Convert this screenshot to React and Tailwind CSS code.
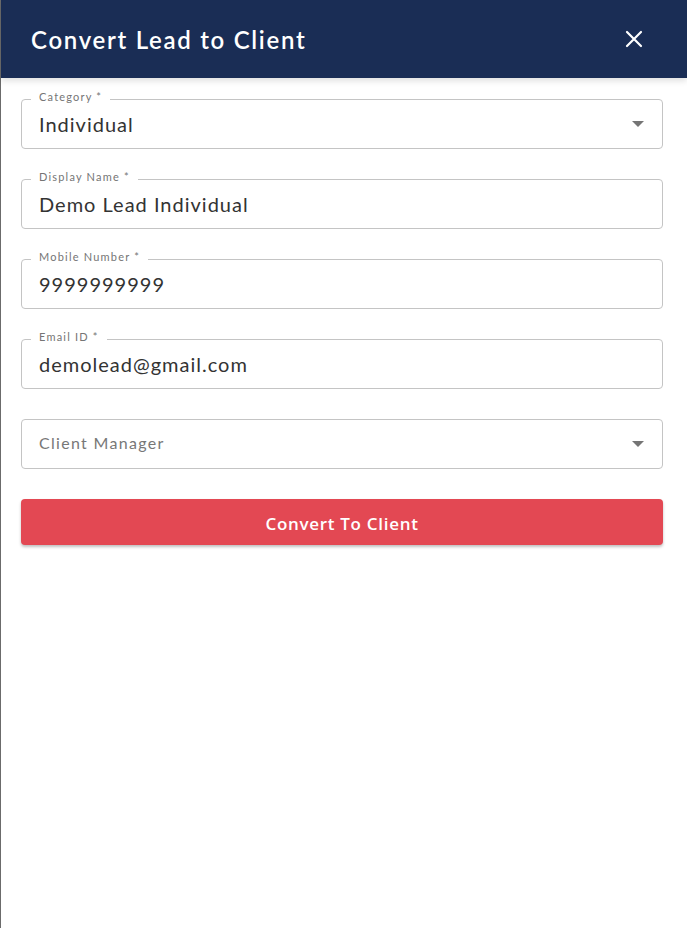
import React from 'react';

const fields = [
  { label: 'Category *', value: 'Individual', select: true },
  { label: 'Display Name *', value: 'Demo Lead Individual' },
  { label: 'Mobile Number *', value: '9999999999' },
  { label: 'Email ID *', value: 'demolead@gmail.com' },
];

const Caret = () => (
  <svg className="w-[12px] h-[6px]" viewBox="0 0 12 6">
    <path d="M0 0h12L6 6z" fill="#757575" />
  </svg>
);

const OutlinedField = ({ label, value, select, placeholder }) => (
  <div className="relative h-[50px] rounded-[4px] border border-[#c4c4c4] flex items-center pl-[17px] pr-[18px]">
    {label && (
      <span className="absolute -top-[10px] left-[9px] bg-white px-[8px] text-[11px] leading-[14px] text-[#757575] tracking-[1.2px]">
        {label}
      </span>
    )}
    <span
      className={
        placeholder
          ? 'flex-1 text-[16px] leading-[20px] -mt-[3px] text-[#777] tracking-[1.3px]'
          : 'flex-1 text-[20px] text-[#333] tracking-[1px]'
      }
    >
      {placeholder || value}
    </span>
    {select && <Caret />}
  </div>
);

export default function App() {
  return (
    <div className="h-[928px] w-[687px] bg-[#6b6b6b] pl-[1px] font-['Lato',sans-serif]">
      <div className="h-full bg-white flex flex-col">
        <div className="h-[78px] bg-[#1a2d55] flex items-center justify-between pl-[30px] pr-[44px] shadow-[0_3px_6px_rgba(0,0,0,0.12)]">
          <h1 className="text-[24px] font-semibold text-white tracking-[1.7px] mt-[2px]">Convert Lead to Client</h1>
          <svg className="w-[18px] h-[18px]" viewBox="0 0 18 18" fill="none" stroke="white" strokeWidth="2.2" strokeLinecap="round">
            <path d="M2 2l14 14M16 2L2 16" />
          </svg>
        </div>
        <div className="px-[20px] pt-[21px] flex flex-col gap-[30px] pr-[24px]">
          {fields.map((f) => (
            <OutlinedField key={f.label} {...f} />
          ))}
          <OutlinedField placeholder="Client Manager" select />
          <button className="h-[46px] rounded-[4px] bg-[#e34853] text-white text-[17px] font-semibold tracking-[0.7px] pt-[3px] shadow-[0_2px_3px_rgba(0,0,0,0.25)] font-['Open_Sans',sans-serif]">
            Convert To Client
          </button>
        </div>
      </div>
    </div>
  );
}
